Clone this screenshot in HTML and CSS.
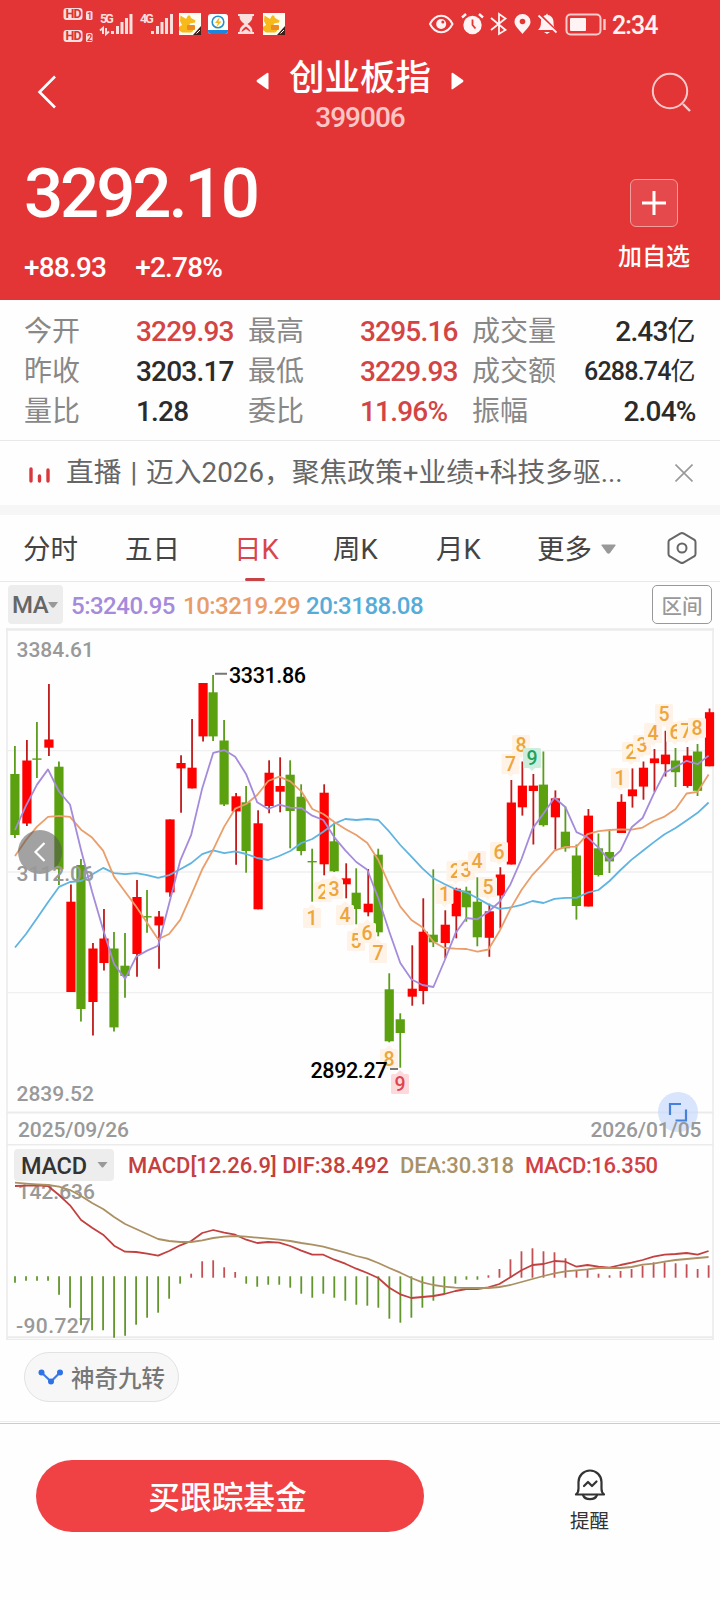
FILE: index.html
```html
<!DOCTYPE html>
<html lang="zh-CN">
<head>
  <meta charset="UTF-8">
  <meta name="viewport" content="width=device-width, initial-scale=1.0">
  <title>创业板指 399006</title>
  <link rel="stylesheet" href="styles.css">
</head>
<body>
  <header>
    <div class="status-bar">
      <svg class="status-left" width="240" height="48" viewBox="60 0 240 48">
        <g class="hd">
          <rect x="63.500" y="8" width="19" height="12" rx="3"/>
          <rect x="63.500" y="30" width="19" height="12" rx="3"/>
          <rect x="86" y="11" width="6.500" height="9" rx="1.500"/>
          <rect x="86" y="33" width="6.500" height="9" rx="1.500"/>
        </g>
        <g class="hd-text">
          <text x="65.500" y="18.300">HD</text>
          <text x="65.500" y="40.300">HD</text>
          <text class="tiny" x="87" y="18.600">1</text>
          <text class="tiny" x="87" y="40.600">2</text>
        </g>
        <g class="net-text">
          <text x="100" y="23">5G</text>
          <text x="140" y="23">4G</text>
        </g>
        <path class="signal" d="M112.500 31v3M117.500 26v8M122 22v12M126.500 18v16M131 14v20M152.500 31v3M157.500 26v8M162 22v12M166.500 18v16M171.500 14v20"/>
        <path class="updown" d="M100 30.500l3-2.500v6M106 28v6l3-2.500"/>
        <g id="dogIcon">
          <rect x="179" y="13" width="22" height="22" fill="#fffdf2"/>
          <path d="M180.500 15.500l5.500 3.500 2-3.500h2l1 2.500 4.500 2.500-.5 2-5 1-1 3 4 1.500v3l-2 1.500h-9l-3-2.500v-3l3-2-2-4z" fill="#f7b91c"/>
          <rect x="187" y="25" width="8" height="5" rx="1" fill="#ee8a22"/>
          <path d="M201 26v9h-8z" fill="#40201a"/>
          <path d="M196.500 33.500l3.500-3.500" stroke="#fff" stroke-width="1"/>
        </g>
        <rect x="208" y="14" width="20" height="20" rx="3" fill="#fff"/>
        <path d="M208 30h20v1a3 3 0 0 1-3 3h-14a3 3 0 0 1-3-3z" fill="#1d86dc"/>
        <circle cx="218" cy="22" r="5.800" fill="none" stroke="#2391c9" stroke-width="1.600"/>
        <path d="M220 16.500l-5 6.500h3l-2 4.500 5.500-6h-3z" fill="#f5b51f"/>
        <path d="M238 14h16v2h-1.500c0 4-2 6-5 8 3 2 5 4 5 8h1.500v2h-16v-2h1.500c0-4 2-6 5-8-3-2-5-4-5-8h-1.500z" fill="#fbdede"/>
        <path d="M241.500 32c.5-2.500 2-4 4.500-5.500 2.500 1.500 4 3 4.500 5.500l-4.500-3z" fill="#e33536"/>
        <use href="#dogIcon" x="84"/>
      </svg>
      <svg class="status-right" width="182" height="48" viewBox="425 0 182 48">
        <g fill="none" stroke="#fff3f3" stroke-width="2">
          <path d="M430 24c5.500-11 17-11 22.500 0-5.500 11-17 11-22.500 0z"/>
          <path d="M491 18l14.500 12-6.500 4V14l6.500 4.500L491 30" stroke-width="1.800"/>
          <path d="M462 17.500l4-3.500M479 14l4 3.500" stroke-width="2.400"/>
        </g>
        <circle cx="441.200" cy="24" r="5" fill="#fff3f3"/>
        <circle cx="442.800" cy="22" r="1.500" fill="#e33536"/>
        <circle cx="472.500" cy="25" r="9.200" fill="#fff3f3"/>
        <path d="M472.500 19.500v5.500l3 3.500" fill="none" stroke="#e33536" stroke-width="1.800"/>
        <path d="M522.500 34c-3-4-8-8-8-12a8 8 0 0 1 16 0c0 4-5 8-8 12z" fill="#fff3f3"/>
        <circle cx="522.500" cy="21.500" r="2.800" fill="#e33536"/>
        <path d="M538 30c2-2 3-4 3-8 0-4 2.500-6.500 5-7l1-1.500 1 1.500c3 .5 5.500 3 5.500 7 0 4 .5 6 2.500 8z" fill="#fff3f3"/>
        <path d="M544 32h6l-3 2z" fill="#fff3f3"/>
        <path d="M540 15l17 17" stroke="#e33536" stroke-width="3"/>
        <path d="M538.500 15.500l18 17" stroke="#fff3f3" stroke-width="1.800"/>
        <rect x="566.500" y="14.500" width="34" height="20" rx="4" fill="none" stroke="#f9caca" stroke-width="2"/>
        <rect x="570" y="18" width="16" height="13" rx="1" fill="#fff3f3"/>
        <path d="M604.500 19v11" stroke="#f9caca" stroke-width="2.400"/>
      </svg>
      <span class="time">2:34</span>
    </div>

    <nav>
      <svg class="back" width="20" height="34" viewBox="0 0 20 34"><path d="M18 1.500L2.500 17 18 32.500" fill="none" stroke="#fff" stroke-width="2.600"/></svg>
      <div class="stock">
        <div class="stock-name">
          <svg width="13" height="18" viewBox="0 0 13 18"><path d="M12.500 2v14.500q0 1.500-1.500.5L1 10q-1-1 0-2L11 1q1.500-1 1.500 1z" fill="#fff"/></svg>
          <h1>创业板指</h1>
          <svg width="13" height="18" viewBox="0 0 13 18"><path d="M.5 2v14.500q0 1.500 1.500.5l10-7q1-1 0-2L2 1Q.5 0 .5 2z" fill="#fff"/></svg>
        </div>
        <div class="stock-code">399006</div>
      </div>
      <svg class="search" width="42" height="42" viewBox="0 0 42 42"><g fill="none" stroke="#fbc9c9" stroke-width="2"><circle cx="19" cy="19" r="17.200"/><path d="M32 32l7 7" stroke-width="2.400"/></g></svg>
    </nav>

    <div class="quote">
      <div>
        <div class="price">3292.10</div>
        <div class="change"><span>+88.93</span><span>+2.78%</span></div>
      </div>
      <div class="add">
        <div class="add-box"><svg width="24" height="24" viewBox="0 0 24 24"><path d="M12 0v24M0 12h24" stroke="#fff" stroke-width="3"/></svg></div>
        <span>加自选</span>
      </div>
    </div>
  </header>

  <section class="stats">
    <span class="label">今开</span><span class="up">3229.93</span>
    <span class="label">最高</span><span class="up">3295.16</span>
    <span class="label">成交量</span><span class="right">2.43<i>亿</i></span>
    <span class="label">昨收</span><span>3203.17</span>
    <span class="label">最低</span><span class="up">3229.93</span>
    <span class="label">成交额</span><span class="right small">6288.74<i>亿</i></span>
    <span class="label">量比</span><span>1.28</span>
    <span class="label">委比</span><span class="up">11.96%</span>
    <span class="label">振幅</span><span class="right">2.04%</span>
  </section>

  <section class="news">
    <svg width="22" height="16" viewBox="0 0 22 16"><path d="M2 2v12M10.500 9v5M19 3v11" stroke="#d8383c" stroke-width="3.400" stroke-linecap="round"/></svg>
    <span class="news-text">直播 | 迈入2026，聚焦政策+业绩+科技多驱...</span>
    <svg width="18" height="18" viewBox="0 0 18 18"><path d="M.5.5l17 17M17.500.5l-17 17" stroke="#999" stroke-width="1.600"/></svg>
  </section>

  <section class="tabs">
    <span>分时</span>
    <span>五日</span>
    <span class="active">日K</span>
    <span>周K</span>
    <span>月K</span>
    <span>更多<svg class="more" width="15" height="10" viewBox="0 0 15 10"><path d="M1 .5h13q1 0 .5 1L9 9q-1.500 1.300-3 0L.5 1.500Q0 .5 1 .5z" fill="#999"/></svg></span>
    <svg width="30" height="32" viewBox="0 0 30 32"><g fill="none" stroke="#666" stroke-width="2"><path d="M13.500 1.500q1.500-.8 3 0l10.500 6q1.500.8 1.500 2.500v12q0 1.700-1.500 2.500l-10.500 6q-1.500.8-3 0l-10.500-6Q1.500 23.700 1.500 22V10q0-1.700 1.500-2.500z"/><circle cx="15" cy="16" r="4.500"/></g></svg>
  </section>

  <section class="ma-row">
    <div class="ma-select">MA<svg width="10" height="6" viewBox="0 0 10 6"><path d="M0 0h10L6.500 5q-1.500 1.300-3 0z" fill="#999"/></svg></div>
    <span class="ma5">5:3240.95</span>
    <span class="ma10">10:3219.29</span>
    <span class="ma20">20:3188.08</span>
    <button type="button" class="range">区间</button>
  </section>

  <svg id="kline" class="chart" width="720" height="714" viewBox="0 628 720 714">
    <g fill="none" stroke="#ebebeb">
      <path stroke-width="2.500" d="M6 629.500h708"/>
      <path stroke-width="1.600" d="M7 628v712M713 628v712"/>
      <path stroke-width="1.300" stroke="#f0f0f0" d="M8 750.700h704M8 872h704M8 992.700h704"/>
      <path stroke-width="2" d="M7 1112.500h706M7 1337.200h706"/>
      <path stroke-width="1.400" d="M7 1144.700h706"/>
      <path stroke-width="1.200" d="M6 1339.500h708"/>
    </g>
    <g class="axis">
      <text x="16.500" y="657">3384.61</text>
      <text x="16.500" y="1100.500">2839.52</text>
    </g>
    <g id="candles"></g>
    <g id="badges"></g>
    <g id="lines" fill="none" stroke-width="1.800" stroke-linejoin="round"></g>
    <g class="peak">
      <path d="M215 673.700h12M390 1069h8" stroke="#777" stroke-width="2"/>
      <text x="229" y="682.500" textLength="77">3331.86</text>
      <text x="310.500" y="1077.500" textLength="77">2892.27</text>
    </g>
    <g>
      <circle cx="40" cy="852" r="22" fill="#555" fill-opacity=".55"/>
      <path d="M44.500 843l-9 9 9 9" fill="none" stroke="#fff" stroke-width="2.200"/>
      <text class="axis" x="16.500" y="880.500">3112.06</text>
    </g>
    <circle cx="678" cy="1112" r="20" fill="#c9dafb" fill-opacity=".7"/>
    <path d="M670 1115v-11h11M675.500 1120.500h10.500v-11" fill="none" stroke="#4682dc" stroke-width="2.200"/>
    <g class="axis">
      <text x="18" y="1136.500" textLength="111">2025/09/26</text>
      <text x="590.500" y="1136.500" textLength="111">2026/01/05</text>
    </g>
    <rect x="14" y="1149" width="100" height="32" rx="4" fill="#ededed"/>
    <path d="M97.500 1162h10l-4 5q-1 1-2 0z" fill="#999"/>
    <g class="macd-text">
      <text class="name" x="21" y="1174" textLength="66">MACD</text>
      <text fill="#c53f3f" x="128" y="1173" textLength="261">MACD[12.26.9] DIF:38.492</text>
      <text fill="#a99166" x="400" y="1173" textLength="114">DEA:30.318</text>
      <text fill="#d23f45" x="525" y="1173" textLength="133">MACD:16.350</text>
    </g>
    <g class="axis">
      <text x="17.500" y="1199">142.636</text>
      <text x="16" y="1332.500" textLength="75">-90.727</text>
    </g>
    <g id="macd" fill="none" stroke-width="1.800" stroke-linejoin="round"></g>
  </svg>

  <section class="signals">
    <div class="chip">
      <svg width="26" height="16" viewBox="0 0 26 16"><path d="M3.500 3.500l9.500 9 9-9" fill="none" stroke="#3b7be8" stroke-width="2.200"/><g fill="#2f72e6"><circle cx="3.500" cy="3.500" r="3"/><circle cx="22" cy="3.500" r="3"/><circle cx="13" cy="12.500" r="3"/></g></svg>
      神奇九转
    </div>
  </section>

  <footer>
    <button type="button" class="buy">买跟踪基金</button>
    <div class="remind">
      <svg width="32" height="32" viewBox="0 0 32 32"><g fill="none" stroke="#333" stroke-width="2.200" stroke-linecap="round" stroke-linejoin="round"><path d="M2 25.500h28c-2-1.500-2.500-3-2.500-6V13a11.500 11.500 0 0 0-23 0v6.500c0 3-.5 4.500-2.500 6z"/><path d="M9 26c2 5.500 12 5.500 14 0M10 17l4-4 4 4 4.500-4.500"/></g></svg>
      <span>提醒</span>
    </div>
  </footer>

  <script>
    const stepX = 11.01;
    const x = i => 15 + i * stepX;

    // [direction, high, body top, body bottom, low]
    const candles = [
      ['g', 746, 774, 835, 838], ['r', 740, 760.5, 823.5, 826], ['g', 722, 758.4, 759.8, 778], ['r', 684, 739.5, 747.7, 756],
      ['g', 761.5, 766.7, 869.3, 885], ['r', 884.4, 901.7, 992, 992], ['g', 859, 865, 1009, 1021.5], ['r', 943, 948.5, 1002, 1035.6],
      ['r', 909, 938.5, 963, 970.5], ['g', 932, 948.5, 1027.4, 1031.5], ['g', 933, 965.7, 976, 997.7], ['r', 880, 897, 954, 976.7],
      ['g', 890, 916.1, 917.5, 932.7], ['r', 911, 916.5, 925.4, 968.8], ['r', 819.4, 819.4, 892.4, 896.8], ['r', 755.3, 763, 768.4, 812.8],
      ['r', 719, 767.7, 788.4, 788.4], ['r', 683, 683, 736.4, 741.5], ['g', 675, 692.3, 736.4, 741], ['g', 720, 740.5, 804.5, 806],
      ['r', 793, 796.3, 811.4, 864.8], ['g', 786, 802.3, 851, 872.7], ['r', 810.3, 823.3, 909.3, 909.3], ['r', 760.3, 772.7, 806, 813.3],
      ['r', 757.3, 786, 791.7, 812.3], ['g', 760.3, 774.7, 811, 848.3], ['g', 784.3, 796.7, 851, 855.3], ['g', 848.7, 861, 862.4, 901.7],
      ['r', 784.3, 792.7, 864.3, 875.3], ['g', 822.7, 841.3, 871.3, 872], ['r', 863.3, 878.3, 884.3, 898.3], ['g', 868.3, 892.7, 909, 924.3],
      ['r', 869, 903.7, 912.3, 916.3], ['g', 848.7, 854.7, 932.3, 936.3], ['g', 973.3, 989.3, 1041.3, 1042.3], ['g', 1013.3, 1019.3, 1033, 1067.7],
      ['r', 945.3, 988.7, 996.7, 1005.7], ['r', 898.3, 931.7, 991, 1004.3], ['g', 869.3, 934.7, 942.3, 947], ['r', 910.3, 924.7, 943, 958.3],
      ['r', 887.7, 888.7, 916.3, 938.3], ['g', 886.7, 890.7, 907.3, 921.7], ['g', 877.3, 901.7, 937.3, 946.3], ['r', 903.7, 911.3, 937.8, 956.8],
      ['r', 867.2, 874.5, 895.5, 928.5], ['r', 780, 802.5, 864.5, 864.5], ['r', 761.5, 785.6, 807.3, 815.6], ['r', 774, 785.6, 791, 844.5],
      ['g', 751.5, 784.6, 825.2, 826.6], ['r', 790.4, 798.3, 817.3, 849.7], ['g', 806.6, 831.7, 848.3, 851.7], ['g', 844.5, 855.5, 906, 919.6],
      ['r', 809, 815.6, 906.5, 906.5], ['g', 833.5, 848.3, 875, 876.5], ['g', 830.4, 852, 861.4, 873], ['r', 794.2, 801.8, 833, 833],
      ['r', 768.4, 789.4, 796.3, 807.6], ['r', 761.5, 767.7, 786.6, 799.7], ['r', 749, 758.4, 763.2, 791.8], ['r', 730.8, 754.6, 764.2, 776.6],
      ['g', 748, 760.5, 772.2, 787], ['r', 747, 755.6, 786, 787.7], ['g', 744, 751.5, 790.8, 796], ['r', 708.5, 712.2, 766.3, 766.3]
    ];

    const ma5 = [830, 805.6, 784.6, 769.4, 791.5, 804.5, 850.3, 891.7, 929.6, 964, 978.8, 956.8, 950.6, 945.7, 903.7, 860.7, 834.8, 788.4, 752.9, 750.1, 756.7, 774.3, 802.3, 809, 804.7, 807.7, 808, 815.7, 820, 837.3, 850.3, 862, 869.7, 898.3, 931.7, 963, 979.3, 985, 987, 961, 933.3, 918, 919.3, 911.7, 902, 884.4, 859, 828.6, 813.5, 797.7, 807.3, 832.1, 837.3, 847.6, 860.7, 850.7, 827.3, 818, 794.2, 772.9, 767, 760.8, 764.2, 755.6];
    const ma10 = [856, 840, 826.6, 816.9, 815.9, 816.9, 829.7, 837.6, 850.7, 876.9, 891.7, 906.5, 922.7, 939.2, 934, 919.9, 895.1, 869.3, 849.7, 826.6, 808.7, 804, 795, 781, 776.7, 781.3, 791.3, 809, 814, 822, 829, 835, 843, 860, 885, 906.7, 920, 927.3, 941.7, 948, 948.7, 949, 951.7, 949.5, 931.3, 908.9, 890, 874.8, 863.1, 850.7, 846.9, 846.6, 834.2, 831.1, 830, 829.3, 829.7, 827.6, 821, 816.6, 809, 793.5, 791.8, 774.6];
    const ma20 = [947.5, 934, 918.2, 902.3, 886.9, 882, 881, 874.5, 867.9, 873.1, 874.1, 873.1, 875.1, 877.9, 875.1, 869.3, 863.1, 854.1, 850.3, 853.1, 851.4, 854, 858, 860, 856, 851, 843, 839, 831.7, 823.7, 819, 820, 819, 820, 831.7, 845, 856.7, 868.3, 878.3, 884, 889.3, 892.3, 898.3, 904.4, 908.9, 907.5, 904.8, 901, 903, 898.9, 897.9, 897.9, 892.7, 890, 881, 870, 859.6, 851, 842.4, 834.2, 828, 820.4, 812.8, 802.5];

    const dif = [1186, 1185.7, 1185.4, 1186, 1195, 1205.3, 1220, 1227.7, 1234.7, 1245.7, 1251.7, 1252, 1253.7, 1255.7, 1251, 1245.3, 1241, 1233, 1230, 1232.7, 1234.7, 1239.7, 1243, 1242, 1242.7, 1246, 1250.7, 1254.7, 1254.7, 1259.7, 1263.7, 1268.7, 1273, 1278, 1287.7, 1294.3, 1298, 1297, 1296, 1294, 1291, 1289, 1289, 1287.3, 1284, 1277.3, 1270.3, 1265, 1264, 1261, 1261.7, 1266.7, 1265, 1266.7, 1267.7, 1265, 1262.7, 1260, 1256.7, 1254.7, 1254, 1253, 1254.7, 1251];
    const dea = [1182.7, 1183.6, 1184.3, 1185, 1186.7, 1190, 1196, 1203, 1209, 1217, 1224, 1229, 1234, 1239, 1241, 1242, 1242, 1240.3, 1238, 1236.7, 1236, 1236.7, 1237.7, 1238.7, 1239.7, 1241, 1243, 1244.7, 1246.7, 1249.7, 1252.7, 1256, 1258.7, 1263, 1268, 1272.7, 1278, 1282.3, 1285, 1286.7, 1287.7, 1288, 1288, 1288, 1287, 1285, 1282, 1279, 1276, 1273.3, 1271.3, 1270.3, 1269.3, 1268, 1268, 1268, 1267, 1264.7, 1263.7, 1261.7, 1260, 1259, 1258, 1257];
    // end of each MACD column, below or above the zero line
    const bars = [1282.7, 1280.7, 1280.7, 1280.7, 1294.7, 1307.7, 1325.3, 1330.3, 1330.3, 1337.7, 1335.7, 1324.7, 1317.7, 1312.7, 1298.7, 1283.7, 1273.7, 1261.3, 1260.3, 1267.3, 1272, 1283.7, 1286.7, 1284.7, 1284.7, 1287.7, 1293.7, 1297.7, 1293.7, 1297.7, 1300.7, 1304.7, 1305.7, 1307.7, 1318.7, 1322.7, 1317.7, 1307.7, 1300.7, 1293.7, 1283.7, 1279.7, 1279.7, 1275.3, 1269, 1259.3, 1251.3, 1248.3, 1251.3, 1252.3, 1258.3, 1271, 1270, 1273.7, 1275.3, 1271, 1269, 1265.7, 1262.3, 1262.3, 1263.3, 1264.3, 1269, 1265.3];

    // [number, x, centre y, type]
    const badges = [
      [1, 312, 918, 'low'], [2, 323, 892, 'low'], [3, 334, 889, 'low'], [4, 345, 915, 'low'], [5, 356, 941, 'low'], [6, 367, 933, 'low'], [7, 378, 953, 'low'], [8, 389, 1059, 'low'], [9, 400, 1084, 'low bottom'],
      [1, 444.5, 894, 'top'], [2, 455.5, 871, 'top'], [3, 466, 870, 'top'], [4, 477, 861, 'top'], [5, 488, 887, 'top'], [6, 499, 852, 'top'], [7, 510.5, 764, 'top'], [8, 521, 745, 'top'], [9, 532, 758, 'top peak9'],
      [1, 620, 778, 'top'], [2, 631, 752, 'top'], [3, 642, 745, 'top'], [4, 653, 733, 'top'], [5, 664, 714, 'top'], [6, 675, 732, 'top'], [7, 686, 730.5, 'top'], [8, 697, 728, 'top']
    ];

    function line(values, color) {
      const points = values.map((y, i) => `${x(i).toFixed(1)},${y}`).join(' ');
      return `<polyline points="${points}" stroke="${color}"/>`;
    }

    document.getElementById('candles').innerHTML = candles.map(([dir, high, top, bottom, low], i) => {
      const cx = x(i) + (dir === 'r' ? 0.9 : -0.1);
      return `<path class="${dir} wick" d="M${cx} ${high}V${low}"/>` +
        `<rect class="${dir}" x="${cx - 4.6}" y="${top}" width="9.2" height="${bottom - top}"/>`;
    }).join('');

    document.getElementById('badges').innerHTML = badges.map(([n, bx, by, type]) => {
      const tip = type.startsWith('low') ? `M${bx - 4} ${by - 10}l4-4 4 4z` : `M${bx - 4} ${by + 9}l4 4 4-4z`;
      return `<g class="badge ${type}"><rect x="${bx - 9}" y="${by - 10}" width="18" height="20" rx="1.5"/>` +
        `<path d="${tip}"/><text x="${bx}" y="${by + 7}">${n}</text></g>`;
    }).join('');

    document.getElementById('lines').innerHTML = line(ma20, '#5fb4e0') + line(ma10, '#ea9f6b') + line(ma5, '#a58bdb');

    document.getElementById('macd').innerHTML = bars.map((y, i) => y > 1277
      ? `<path d="M${x(i)} 1276.3V${y}" stroke="#62962c"/>`
      : `<path d="M${x(i)} 1277.7V${y}" stroke="#c25055"/>`
    ).join('') + line(dif, '#c2403f') + line(dea, '#ab9063');
  </script>
</body>
</html>
```
FILE: styles.css
```css
* {
  box-sizing: border-box;
}

body {
  margin: 0;
  width: 720px;
  min-height: 1600px;
  background: #fefefe;
  font-family: Roboto, "Noto Sans CJK SC", sans-serif;
  color: #2b2b2b;
}

svg {
  display: block;
  flex: none;
}

button {
  font-family: inherit;
  padding: 0;
}

i {
  font-style: normal;
}

/* Header */
header {
  height: 300px;
  background: #e33536;
  color: #fff;
}

.status-bar {
  display: flex;
  height: 48px;
  padding-left: 60px;
}

.status-right {
  margin-left: 125px;
}

.time {
  margin-left: 5px;
  font-size: 25px;
  font-weight: 500;
  line-height: 51px;
  letter-spacing: -0.9px;
  color: #fff3f3;
}

.hd rect {
  fill: #fbdede;
}

.hd-text {
  font-size: 12.5px;
  font-weight: 700;
  fill: #d33;
  letter-spacing: -0.8px;
}

.hd-text .tiny {
  font-size: 9px;
}

.net-text {
  font-size: 12.5px;
  font-weight: 700;
  fill: #fbdede;
  letter-spacing: -1.8px;
}

.signal {
  stroke: #fbdede;
  stroke-width: 3;
}

.updown {
  fill: none;
  stroke: #fbdede;
  stroke-width: 2;
}

nav {
  display: flex;
  justify-content: space-between;
  height: 92px;
  padding: 0 27px 0 37px;
}

.back {
  margin-top: 27px;
}

.search {
  margin-top: 24px;
}

.stock {
  margin-left: 12px;
  text-align: center;
}

.stock-name {
  display: flex;
  align-items: center;
  justify-content: center;
  gap: 20px;
  height: 56px;
  padding-top: 3px;
}

h1 {
  margin: 0;
  font-size: 35.5px;
  font-weight: 500;
  line-height: 48px;
}

.stock-name svg {
  margin-top: 6px;
}

.stock-code {
  margin-top: -1px;
  font-size: 28px;
  font-weight: 500;
  line-height: 30px;
  letter-spacing: -1px;
  color: #fbc5c5;
}

.quote {
  display: flex;
  justify-content: space-between;
  padding: 0 30px 0 24px;
}

.price {
  height: 104px;
  font-size: 69px;
  font-weight: 500;
  line-height: 108px;
  letter-spacing: -3.1px;
}

.change {
  display: flex;
  gap: 29px;
  font-size: 28px;
  font-weight: 500;
  line-height: 48px;
  letter-spacing: -0.8px;
}

.add {
  display: flex;
  flex-direction: column;
  align-items: center;
  padding-top: 39px;
  font-size: 24px;
  font-weight: 500;
}

.add-box {
  display: flex;
  align-items: center;
  justify-content: center;
  width: 48px;
  height: 48px;
  border: 1px solid #f29c9c;
  border-radius: 6px;
  background: #e6494b;
}

.add span {
  margin-top: 12px;
  line-height: 36px;
}

/* Stats */
.stats {
  display: grid;
  grid-template-columns: 112px 112px 112px 112px 120px 1fr;
  grid-auto-rows: 40px;
  height: 141px;
  padding: 12px 24px 0;
  border-bottom: 1px solid #e8e8e8;
  font-size: 28px;
  font-weight: 500;
  line-height: 40px;
  letter-spacing: -0.8px;
  white-space: nowrap;
}

.label,
.stats i {
  font-weight: 400;
  letter-spacing: 0;
}

.label {
  color: #888;
}

.up {
  color: #d34545;
}

.right {
  margin-right: 0;
  text-align: right;
  transform: translateX(-8px);
}

.small {
  font-size: 25px;
}

/* News */
.news {
  display: flex;
  align-items: center;
  height: 74px;
  padding: 0 27px 0 29px;
  border-bottom: 10px solid #f6f6f6;
}

.news > svg:first-child {
  margin-top: 4px;
}

.news-text {
  flex: 1;
  margin-left: 15px;
  font-size: 27.7px;
  line-height: 60px;
  word-spacing: 2px;
  letter-spacing: 0.05px;
  color: #666;
  white-space: nowrap;
}

/* Tabs */
.tabs {
  display: grid;
  grid-template-columns: 102px 109px 99px 103px 101px 130px 1fr;
  align-items: center;
  height: 67px;
  padding-left: 23px;
  border-bottom: 1px solid #e8e8e8;
  font-size: 27.5px;
  line-height: 66px;
  color: #444;
}

.tabs span {
  height: 66px;
  padding-top: 2px;
}

.tabs .active {
  position: relative;
  color: #d8454c;
}

.active::after {
  content: "";
  position: absolute;
  left: 11px;
  bottom: 0;
  width: 20px;
  height: 3px;
  border-radius: 2px;
  background: #c74348;
}

.more {
  display: inline-block;
  margin-left: 9px;
  vertical-align: 5px;
}

/* MA */
.ma-row {
  display: flex;
  align-items: center;
  height: 46px;
  padding: 0 8px 1px;
  font-size: 24px;
  font-weight: 500;
  letter-spacing: -0.5px;
}

.ma-row > span {
  padding-top: 2px;
}

.ma-select {
  display: flex;
  align-items: center;
  width: 55px;
  height: 39px;
  padding-left: 4px;
  border-radius: 4px;
  background: #ededed;
  color: #666;
}

.ma5 {
  width: 112px;
  margin-left: 8px;
  color: #a58bdb;
}

.ma10 {
  width: 123px;
  color: #e99c67;
}

.ma20 {
  color: #55acd8;
}

.range {
  width: 60px;
  height: 39px;
  margin-left: auto;
  border: 1px solid #999;
  border-radius: 5px;
  background: #fff;
  font-size: 20.5px;
  font-weight: 500;
  color: #999;
}

/* Chart */
.axis {
  font-size: 21px;
  font-weight: 500;
  fill: #999;
}

.peak {
  font-size: 21.5px;
  font-weight: 500;
  fill: #000;
}

.macd-text {
  font-size: 22px;
  font-weight: 500;
}

.macd-text .name {
  font-size: 23.5px;
  fill: #333;
}

.g {
  fill: #5ba00e;
  stroke: none;
}

.r {
  fill: #ff0000;
}

.wick {
  stroke-width: 1.8;
}

.g.wick {
  stroke: #5b9c1c;
}

.r.wick {
  stroke: #c01a1a;
}

.badge rect,
.badge path {
  fill: #fef3e6;
}

.badge text {
  font-size: 19.5px;
  font-weight: 500;
  text-anchor: middle;
  fill: #eda53c;
}

.bottom rect,
.bottom path {
  fill: #fcdadc;
}

.badge.bottom text {
  fill: #dc4450;
}

.peak9 rect,
.peak9 path {
  fill: #cdeedd;
}

.badge.peak9 text {
  fill: #1ea25e;
}

/* Signals */
.signals {
  height: 80px;
  padding: 10px 24px;
  border-bottom: 1px solid #ececec;
}

.chip {
  display: flex;
  align-items: center;
  gap: 7px;
  width: 155px;
  height: 50px;
  padding-left: 13px;
  border: 1px solid #e2e2e2;
  border-radius: 25px;
  background: #f7f7f8;
  font-size: 23.5px;
  font-weight: 500;
  color: #777;
  white-space: nowrap;
}

/* Footer */
footer {
  display: flex;
  align-items: flex-start;
  height: 177px;
  margin-top: 1px;
  padding: 36px 36px 0;
  border-top: 1px solid #ccc;
}

footer .buy {
  width: 388px;
  height: 72px;
  padding: 0 5px 2px 0;
  border: none;
  border-radius: 36px;
  background: #f04144;
  font-size: 31.7px;
  font-weight: 500;
  color: #fff;
}

.remind {
  display: flex;
  flex-direction: column;
  align-items: center;
  margin: 9px 0 0 146px;
  font-size: 19.5px;
  color: #333;
}

.remind span {
  margin-top: 4px;
}
```
